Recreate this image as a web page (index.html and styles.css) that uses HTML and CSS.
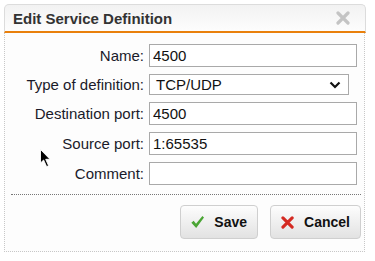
FILE: index.html
```html
<!DOCTYPE html>
<html lang="en">

<head>
    <meta charset="UTF-8">
    <title>Edit Service Definition</title>
    <link rel="stylesheet" href="styles.css">
</head>

<body>
    <div class="dialog">
        <div class="dialog-head">
            <span class="dialog-title">Edit Service Definition</span>
            <svg class="close-icon" width="14" height="14" viewBox="0 0 14 14">
                <path d="M2 2 L12 12 M12 2 L2 12" stroke="#c4c4c4" stroke-width="3.2" stroke-linecap="round" />
            </svg>
        </div>
        <div class="dialog-body">
            <form class="form-grid">
                <label for="name">Name:</label>
                <input type="text" id="name" value="4500">

                <label for="type">Type of definition:</label>
                <div class="select">
                    <span>TCP/UDP</span>
                    <svg width="12" height="8" viewBox="0 0 12 8">
                        <path d="M1.5 1.5 L6 6 L10.5 1.5" fill="none" stroke="#111" stroke-width="2.2" />
                    </svg>
                </div>

                <label for="dport">Destination port:</label>
                <input type="text" id="dport" value="4500">

                <label for="sport">Source port:</label>
                <input type="text" id="sport" value="1:65535">

                <label for="comment">Comment:</label>
                <input type="text" id="comment" value="">
            </form>
            <div class="buttons">
                <button class="btn" type="button">
                    <svg width="19" height="18" viewBox="0 0 19 18">
                        <path d="M0.5 10 L3.8 7.2 L7.2 11.6 L16.3 0.6 L18.6 2.6 L7.4 17.4 Z" fill="#4aa534" />
                    </svg>
                    Save
                </button>
                <button class="btn" type="button">
                    <svg width="17" height="17" viewBox="0 0 17 17">
                        <path d="M2.5 2.5 L14.5 14.5 M14.5 2.5 L2.5 14.5" stroke="#d42a22" stroke-width="4" stroke-linecap="round" />
                    </svg>
                    Cancel
                </button>
            </div>
        </div>
    </div>

    <!-- mouse pointer captured in the screenshot -->
    <svg class="pointer" width="12" height="19" viewBox="0 0 12 19">
        <path d="M0.5 0.5 L0.5 14 L3.6 11 L6.6 17.6 L8.6 16.7 L5.7 10.3 L10 10.3 Z" fill="#000" stroke="#fff" stroke-width="0.9" />
    </svg>
</body>

</html>
```

FILE: styles.css
```css
html,
body {
    background-color: #fff;
}

* {
    margin: 0;
    padding: 0;
    box-sizing: border-box;
}

body {
    font-family: "Liberation Sans", Arial, sans-serif;
    color: #222;
    padding: 4px 9px 0 4px;
}

.dialog {
    width: 362px;
}

.dialog-head {
    height: 29px;
    padding: 0 9px 0 8px;
    display: flex;
    align-items: center;
    justify-content: space-between;
    background: linear-gradient(#f2f2f2, #fdfdfd);
    border: 1px solid #dcdcdc;
    border-bottom: 2px solid #e9800c;
    border-radius: 5px 5px 0 0;
}

.dialog-title {
    font-size: 15px;
    font-weight: bold;
    color: #333;
}

.close-icon {
    margin-right: 6px;
}

.dialog-body {
    width: 361px;
    border: 1px dotted #c8c8c8;
    border-top: 0;
    padding: 11px 3px 12px 6px;
    background-color: #fdfdfd;
}

.form-grid {
    display: grid;
    grid-template-columns: 133px 208px;
    column-gap: 5px;
    row-gap: 7px;
    align-items: center;
    font-size: 15px;
    padding-bottom: 9px;
    border-bottom: 1px dotted #777;
}

.form-grid label {
    text-align: right;
    color: #1a1a2a;
}

.form-grid input {
    height: 23px;
    width: 208px;
    border: 1px solid #a9a9a9;
    padding: 0 3px;
    font-family: "Liberation Sans", Arial, sans-serif;
    font-size: 15px;
    color: #111;
    background-color: #fff;
}

.select {
    height: 21px;
    width: 200px;
    border: 1px solid #a9a9a9;
    background-color: #fff;
    display: flex;
    align-items: center;
    justify-content: space-between;
    padding: 0 7px 0 6px;
    color: #111;
}

.buttons {
    display: flex;
    justify-content: flex-end;
    gap: 12px;
    padding-top: 10px;
}

.btn {
    height: 34px;
    display: flex;
    align-items: center;
    gap: 10px;
    padding: 0 10px;
    font-family: "Liberation Sans", Arial, sans-serif;
    font-size: 14px;
    font-weight: bold;
    color: #111;
    background: linear-gradient(#fdfdfd, #e2e2e2);
    border: 1px solid #cfcfcf;
    border-radius: 4px;
}

.btn:first-child {
    width: 78px;
}

.btn:last-child {
    width: 91px;
}

.pointer {
    position: absolute;
    left: 40px;
    top: 149px;
}
```
